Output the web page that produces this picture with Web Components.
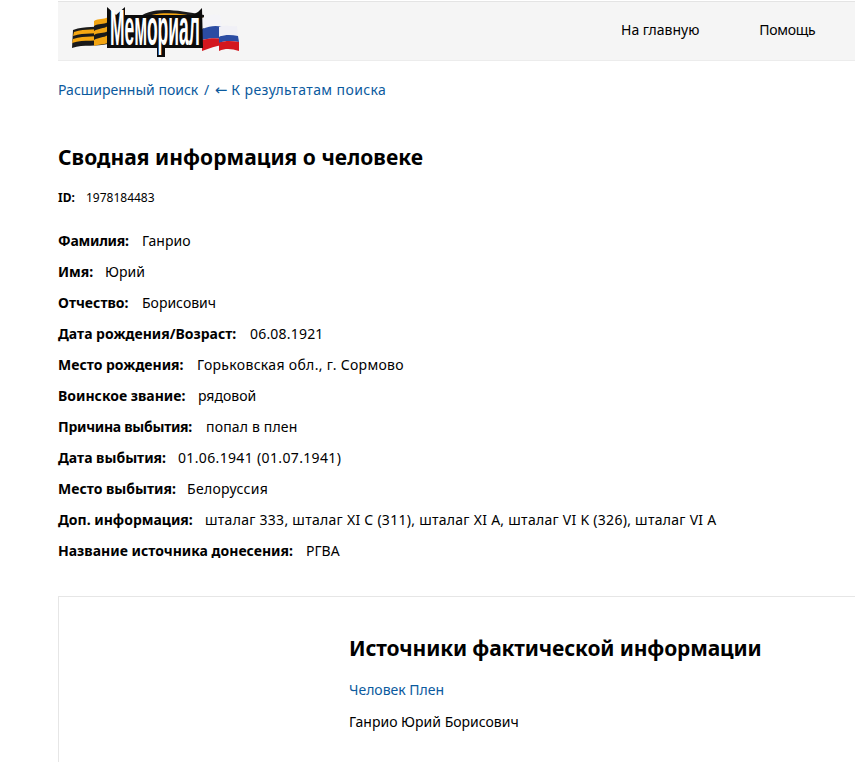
<!DOCTYPE html>
<html lang="ru">
<head>
<meta charset="utf-8">
<title>Сводная информация о человеке</title>
<style>
  html, body { margin: 0; padding: 0; background: #fff; overflow: hidden; }
  body { font-family: "Noto Sans", "Open Sans", sans-serif; color: #000; font-size: 14px; height: 762px; }
</style>
</head>
<body>
<memorial-page>
  <site-header></site-header>
  <bread-crumbs></bread-crumbs>
  <person-summary id-number="1978184483">
    <info-row label="Фамилия:" label-width="84" style="--label-spacing:-.25px">Ганрио</info-row>
    <info-row label="Имя:" label-width="47">Юрий</info-row>
    <info-row label="Отчество:" label-width="84">Борисович</info-row>
    <info-row label="Дата рождения/Возраст:" label-width="192" style="--value-spacing:.2px">06.08.1921</info-row>
    <info-row label="Место рождения:" label-width="139" style="--value-spacing:.32px">Горьковская обл., г. Сормово</info-row>
    <info-row label="Воинское звание:" label-width="140">рядовой</info-row>
    <info-row label="Причина выбытия:" label-width="148" style="--label-spacing:-.28px;--value-spacing:.17px">попал в плен</info-row>
    <info-row label="Дата выбытия:" label-width="120" style="--value-spacing:.35px">01.06.1941 (01.07.1941)</info-row>
    <info-row label="Место выбытия:" label-width="129" style="--value-spacing:.3px">Белоруссия</info-row>
    <info-row label="Доп. информация:" label-width="147" style="--value-spacing:.28px">шталаг 333, шталаг XI C (311), шталаг XI A, шталаг VI K (326), шталаг VI A</info-row>
    <info-row label="Название источника донесения:" label-width="248">РГВА</info-row>
  </person-summary>
  <source-card></source-card>
</memorial-page>

<script>
class MemorialPage extends HTMLElement {
  constructor() {
    super();
    this.attachShadow({ mode: "open" });
    this.shadowRoot.innerHTML = `
      <style>
        :host { display: block; padding-left: 58px; padding-top: 1px; }
      </style>
      <slot></slot>
    `;
  }
}

class SiteHeader extends HTMLElement {
  constructor() {
    super();
    this.attachShadow({ mode: "open" });
    this.shadowRoot.innerHTML = `
      <style>
        :host {
          display: flex;
          align-items: center;
          background: #f5f5f5;
          border-top: 1px solid #e4e4e4;
          border-bottom: 1px solid #ececec;
          box-sizing: border-box;
          height: 60px;
        }
        svg { display: block; margin-left: 14px; flex: none; overflow: visible; }
        nav { display: flex; margin-left: 379px; margin-bottom: 3px; gap: 60px; font-size: 14px; }
        a { color: #000; text-decoration: none; white-space: nowrap; }
        a + a { letter-spacing: -.3px; }
      </style>
      <svg width="170" height="56" viewBox="0 0 170 56" role="img" aria-label="Мемориал">
        <path d="M1 27 C14 22 24 26 36 21 L36 41 C24 44 12 41 0 45 Z" fill="#1a1a1a"/>
        <path d="M2 29 C14 25 24 28 36 24 L36 28 C24 32 13 29 1 33 Z" fill="#f5a712"/>
        <path d="M1 36 C14 32 24 35 36 31 L36 36 C24 39 13 36 0 40 Z" fill="#f5a712"/>
        <path d="M22 18 C27 15 31 17 36 14 L36 40 C31 42 27 41 22 43 Z" fill="#f3a512"/>
        <path d="M22 23 C27 20 31 22 36 19 L36 23 C31 26 27 25 22 28 Z M22 32 C27 29 31 31 36 28 L36 32 C31 35 27 34 22 37 Z" fill="#1a1a1a"/>
        <path d="M64 17 C78 3 100 6 132 12 L132 30 L64 30 Z" fill="#1a1a1a"/>
        <path d="M68 16 C84 8 104 9 132 15 L132 19 C104 14 86 12 70 21 Z" fill="#f5a712"/>
        <path d="M130 15 C138 11 144 11 148 12 L150 24 C144 22 138 23 130 26 Z" fill="#f4f4f8"/>
        <path d="M130 26 C138 23 144 22 150 24 L150 36 C144 35 138 35 130 37 Z" fill="#2b4ca3"/>
        <path d="M130 37 C138 35 144 35 150 36 L150 42 C144 43 138 45 130 48 Z" fill="#d3171f"/>
        <path d="M147 24 C154 21 160 24 165 23 L166 33 C160 32 154 31 147 34 Z" fill="#f0f0f6"/>
        <path d="M147 34 C154 31 160 32 166 33 L167 39 C160 38 154 37 147 40 Z" fill="#2b4ca3"/>
        <path d="M147 40 C154 37 160 38 167 39 L167 48 C160 46 154 45 147 48 Z" fill="#d3171f"/>
        <path d="M35 4 L44 12 L53 4 L53 12 L120 12 L126 9 L130 5 L131 45 L93 45 L93 54 L85 54 L85 45 L35 45 Z" fill="#0c0c0c"/>
        <text x="38" y="42" font-family="'Liberation Sans', sans-serif" font-size="50" font-weight="700" fill="#fff" textLength="90" lengthAdjust="spacingAndGlyphs">Мемориал</text>
      </svg>
      <nav>
        <a href="#">На главную</a>
        <a href="#">Помощь</a>
      </nav>
    `;
  }
}

class BreadCrumbs extends HTMLElement {
  constructor() {
    super();
    this.attachShadow({ mode: "open" });
    this.shadowRoot.innerHTML = `
      <style>
        :host { display: block; margin-top: 19px; line-height: 20px; font-size: 14px; color: #0b5a9e; white-space: nowrap; }
        a { color: #0b5a9e; text-decoration: none; }
        .sep { margin: 0 2px; }
        .back { letter-spacing: .4px; }
        .arrow { font-family: "DejaVu Sans", sans-serif; font-size: 15px; letter-spacing: 0; }
      </style>
      <a href="#">Расширенный поиск</a> <span class="sep">/</span> <a class="back" href="#"><span class="arrow">←</span> К результатам поиска</a>
    `;
  }
}

class PersonSummary extends HTMLElement {
  constructor() {
    super();
    this.attachShadow({ mode: "open" });
    this.shadowRoot.innerHTML = `
      <style>
        :host { display: block; }
        h1 { margin: 42px 0 0; font-size: 21px; line-height: 30px; font-weight: 700; letter-spacing: .04px; }
        .id { margin-top: 17px; margin-bottom: 24px; font-size: 12px; line-height: 18px; }
        .id b { margin-right: 8px; }
        .rows { display: flex; flex-direction: column; gap: 11px; }
      </style>
      <h1>Сводная информация о человеке</h1>
      <div class="id"><b>ID:</b> <span></span></div>
      <div class="rows"><slot></slot></div>
    `;
    this.shadowRoot.querySelector(".id span").textContent = this.getAttribute("id-number");
  }
}

class InfoRow extends HTMLElement {
  constructor() {
    super();
    this.attachShadow({ mode: "open" });
    this.shadowRoot.innerHTML = `
      <style>
        :host { display: block; line-height: 20px; font-size: 14px; white-space: nowrap; letter-spacing: var(--value-spacing, 0); }
        b { display: inline-block; font-weight: 700; letter-spacing: var(--label-spacing, 0); }
      </style>
      <b></b><slot></slot>
    `;
    const label = this.shadowRoot.querySelector("b");
    label.textContent = this.getAttribute("label");
    label.style.width = this.getAttribute("label-width") + "px";
  }
}

class SourceCard extends HTMLElement {
  constructor() {
    super();
    this.attachShadow({ mode: "open" });
    this.shadowRoot.innerHTML = `
      <style>
        :host {
          display: block;
          box-sizing: border-box;
          margin-top: 35px;
          border: 1px solid #e6e6e6;
          border-right: 0;
          border-bottom: 0;
          padding: 36px 0 0 290px;
          height: 166px;
        }
        h2 { margin: 0; font-size: 21px; line-height: 30px; font-weight: 700; white-space: nowrap; letter-spacing: -.14px; }
        .kind { display: block; margin-top: 17px; line-height: 20px; color: #0b5a9e; text-decoration: none; }
        .name { margin-top: 12px; line-height: 20px; }
      </style>
      <h2>Источники фактической информации</h2>
      <a class="kind" href="#">Человек Плен</a>
      <div class="name">Ганрио Юрий Борисович</div>
    `;
  }
}

customElements.define("memorial-page", MemorialPage);
customElements.define("site-header", SiteHeader);
customElements.define("bread-crumbs", BreadCrumbs);
customElements.define("person-summary", PersonSummary);
customElements.define("info-row", InfoRow);
customElements.define("source-card", SourceCard);
</script>
</body>
</html>
